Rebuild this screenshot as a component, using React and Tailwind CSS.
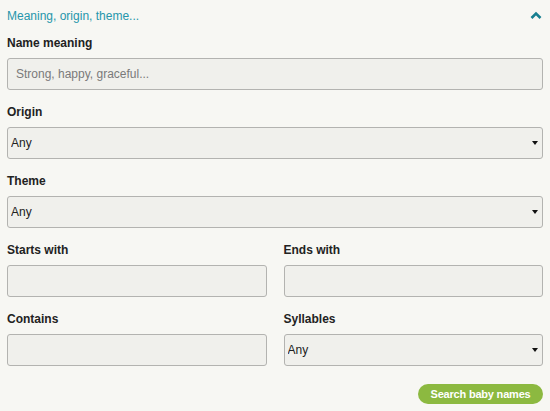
import React from "react";

/* ── PIECES ───────────────────────── */

function Label({ children }) {
  return (
    <label className="block text-[12px] leading-[16px] font-bold text-[#222222] mb-[7px]">
      {children}
    </label>
  );
}

function TextBox({ placeholder = "" }) {
  return (
    <input
      type="text"
      placeholder={placeholder}
      className="block w-full h-[32px] px-[8px] text-[12px] text-[#222222] bg-[#f0f0ec] border border-[#b3b3b0] rounded-[3px] placeholder:text-[#7a7a7a] outline-none"
    />
  );
}

function SelectBox({ value = "Any" }) {
  return (
    <div className="relative">
      <select
        defaultValue={value}
        className="block w-full h-[32px] pl-[3px] pr-[20px] text-[12px] text-[#222222] bg-[#f0f0ec] border border-[#b3b3b0] rounded-[3px] appearance-none outline-none"
      >
        <option>{value}</option>
      </select>
      <svg
        className="absolute right-[5px] top-[14px] pointer-events-none"
        width="6"
        height="4"
        viewBox="0 0 6 4"
      >
        <path d="M0 0 H6 L3 4 Z" fill="#111111" />
      </svg>
    </div>
  );
}

/* ── COMPONENT ───────────────────── */

export default function App() {
  return (
    <main className="w-[550px] h-[411px] bg-[#f7f7f3] px-[7px] overflow-hidden font-['Liberation_Sans',Arial,sans-serif]">
      {/* header */}
      <div className="flex items-center justify-between h-[30px] pt-[1px] mb-[5px]">
        <span className="text-[12px] text-[#2696ab]">Meaning, origin, theme...</span>
        <svg width="12" height="9" viewBox="0 0 12 9" className="mr-[1px]">
          <path d="M1.5 7 L6 2.5 L10.5 7" stroke="#177f90" strokeWidth="2.6" fill="none" />
        </svg>
      </div>

      <div className="mb-[14px]">
        <Label>Name meaning</Label>
        <TextBox placeholder="Strong, happy, graceful..." />
      </div>

      <div className="mb-[14px]">
        <Label>Origin</Label>
        <SelectBox />
      </div>

      <div className="mb-[14px]">
        <Label>Theme</Label>
        <SelectBox />
      </div>

      <div className="grid grid-cols-2 gap-x-[17px] gap-y-[14px]">
        <div>
          <Label>Starts with</Label>
          <TextBox />
        </div>
        <div>
          <Label>Ends with</Label>
          <TextBox />
        </div>
        <div>
          <Label>Contains</Label>
          <TextBox />
        </div>
        <div>
          <Label>Syllables</Label>
          <SelectBox />
        </div>
      </div>

      <div className="flex justify-end mt-[18px]">
        <button className="w-[125px] h-[20px] rounded-full bg-[#8cb940] text-white text-[11px] tracking-[-0.2px] font-bold leading-[20px]">
          Search baby names
        </button>
      </div>
    </main>
  );
}
